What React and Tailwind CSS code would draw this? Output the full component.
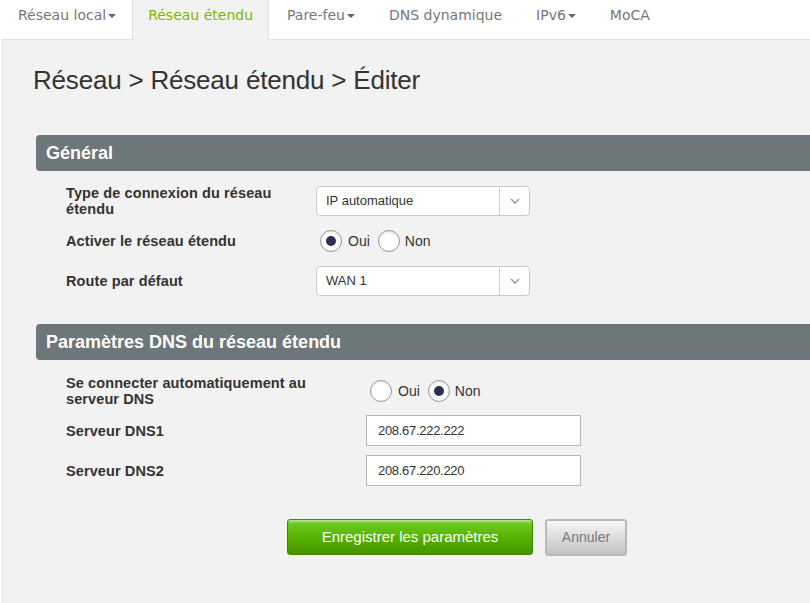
import React from "react";

function Caret() {
  return (
    <span className="ml-[2px] inline-block h-0 w-0 border-x-[4px] border-t-[4px] border-x-transparent border-t-[#666] align-middle" />
  );
}

function Tab({ label, caret, active, first }) {
  if (active) {
    return (
      <div className="relative z-10 mx-[1px] h-[40px] border-x border-[#e0e0e0] bg-[#f2f2f2] px-[15px] pt-[5px] leading-[20px] text-[#7cb800]">
        {label}
      </div>
    );
  }
  return (
    <div className={`h-[39px] pl-[17px] ${first ? "pr-[15px]" : "pr-[17px]"} pt-[5px] leading-[20px] text-[#777]`}>
      {label}
      {caret && <Caret />}
    </div>
  );
}

function Select({ value }) {
  return (
    <div className="flex h-[30px] w-[214px] rounded-[4px] border border-[#c9c9c9] bg-white">
      <div className="flex flex-1 items-center pl-[9px] text-[13px] text-[#333]">{value}</div>
      <div className="flex w-[30px] items-center justify-center border-l border-[#d2d2d2]">
        <svg width="10" height="6" viewBox="0 0 10 6">
          <path d="M1 1 L5 5 L9 1" fill="none" stroke="#a0a0a0" strokeWidth="1.6" />
        </svg>
      </div>
    </div>
  );
}

function Radio({ checked }) {
  return (
    <span className="flex h-[22px] w-[22px] items-center justify-center rounded-full border border-[#9a9a9a] bg-white shadow-[inset_0_1px_2px_rgba(0,0,0,0.12)]">
      {checked && <span className="h-[10px] w-[10px] rounded-full bg-[#2c2e52]" />}
    </span>
  );
}

function RadioGroup({ value }) {
  return (
    <div className="ml-[4px] flex items-center text-[14px] text-[#333]">
      <Radio checked={value === "oui"} />
      <span className="ml-[6px] mr-[8px]">Oui</span>
      <Radio checked={value === "non"} />
      <span className="ml-[5px]">Non</span>
    </div>
  );
}

function TextInput({ value }) {
  return (
    <div className="flex h-[31px] w-[215px] items-center border border-[#b5b5b5] bg-white pl-[11px] text-[13px] tracking-[-0.3px] text-[#333]">
      {value}
    </div>
  );
}

function Row({ labelW, label, children, h, mt }) {
  return (
    <div className={`flex items-center ${h} ${mt}`}>
      <div className={`${labelW} shrink-0 pr-[20px] text-[14.5px] font-bold leading-[16px] tracking-[0.1px] text-[#333]`}>
        {label}
      </div>
      {children}
    </div>
  );
}

function SectionHeader({ title, mt }) {
  return (
    <div className={`${mt} h-[36px] w-[800px] rounded-l-[4px] bg-[#6d7678] pl-[10px] text-[18px] font-bold leading-[36px] text-white`}>
      {title}
    </div>
  );
}

export default function App() {
  return (
    <div className="h-[603px] w-[810px] overflow-hidden bg-white font-['Liberation_Sans',Arial,sans-serif]">
      <div className="ml-[2px] flex h-[40px] border-b border-[#e0e0e0] font-['DejaVu_Sans',Verdana,sans-serif] text-[14px]">
        <div className="-ml-px flex">
          <Tab label="Réseau local" caret first />
          <Tab label="Réseau étendu" active />
          <Tab label="Pare-feu" caret />
          <Tab label="DNS dynamique" />
          <Tab label="IPv6" caret />
          <Tab label="MoCA" />
        </div>
      </div>
      <div className="ml-[2px] h-[563px] border-l border-[#e0e0e0] bg-[#f2f2f2] pl-[30px]">
        <h1 className="pt-[25px] text-[26px] leading-[30px] tracking-[-0.2px] text-[#333]">
          Réseau &gt; Réseau étendu &gt; Éditer
        </h1>
        <div className="ml-[3px]">
          <SectionHeader title="Général" mt="mt-[40px]" />
          <div className="pl-[30px]">
            <Row labelW="w-[250px]" label="Type de connexion du réseau étendu" h="h-[32px]" mt="mt-[14px]">
              <Select value="IP automatique" />
            </Row>
            <Row labelW="w-[250px]" label="Activer le réseau étendu" h="h-[30px]" mt="mt-[9px]">
              <RadioGroup value="oui" />
            </Row>
            <Row labelW="w-[250px]" label="Route par défaut" h="h-[30px]" mt="mt-[10px]">
              <Select value="WAN 1" />
            </Row>
          </div>
          <SectionHeader title="Paramètres DNS du réseau étendu" mt="mt-[28px]" />
          <div className="pl-[30px]">
            <Row labelW="w-[300px]" label="Se connecter automatiquement au serveur DNS" h="h-[32px]" mt="mt-[15px]">
              <RadioGroup value="non" />
            </Row>
            <Row labelW="w-[300px]" label="Serveur DNS1" h="h-[31px]" mt="mt-[8px]">
              <TextInput value="208.67.222.222" />
            </Row>
            <Row labelW="w-[300px]" label="Serveur DNS2" h="h-[31px]" mt="mt-[9px]">
              <TextInput value="208.67.220.220" />
            </Row>
          </div>
          <div className="ml-[251px] mt-[33px] flex items-start gap-[12px]">
            <button className="h-[36px] w-[246px] rounded-[3px] border border-[#3f8b00] bg-[linear-gradient(to_bottom,#bde994_0%,#70c824_10%,#58b602_45%,#449400_100%)] text-[15px] text-white">
              Enregistrer les paramètres
            </button>
            <button className="h-[37px] w-[82px] rounded-[3px] border-2 border-[#b9b9b9] bg-[linear-gradient(to_bottom,#f6f6f6_0%,#dcdcdc_50%,#c2c2c2_100%)] text-[14px] text-[#7a7a7a]">
              Annuler
            </button>
          </div>
        </div>
      </div>
    </div>
  );
}
